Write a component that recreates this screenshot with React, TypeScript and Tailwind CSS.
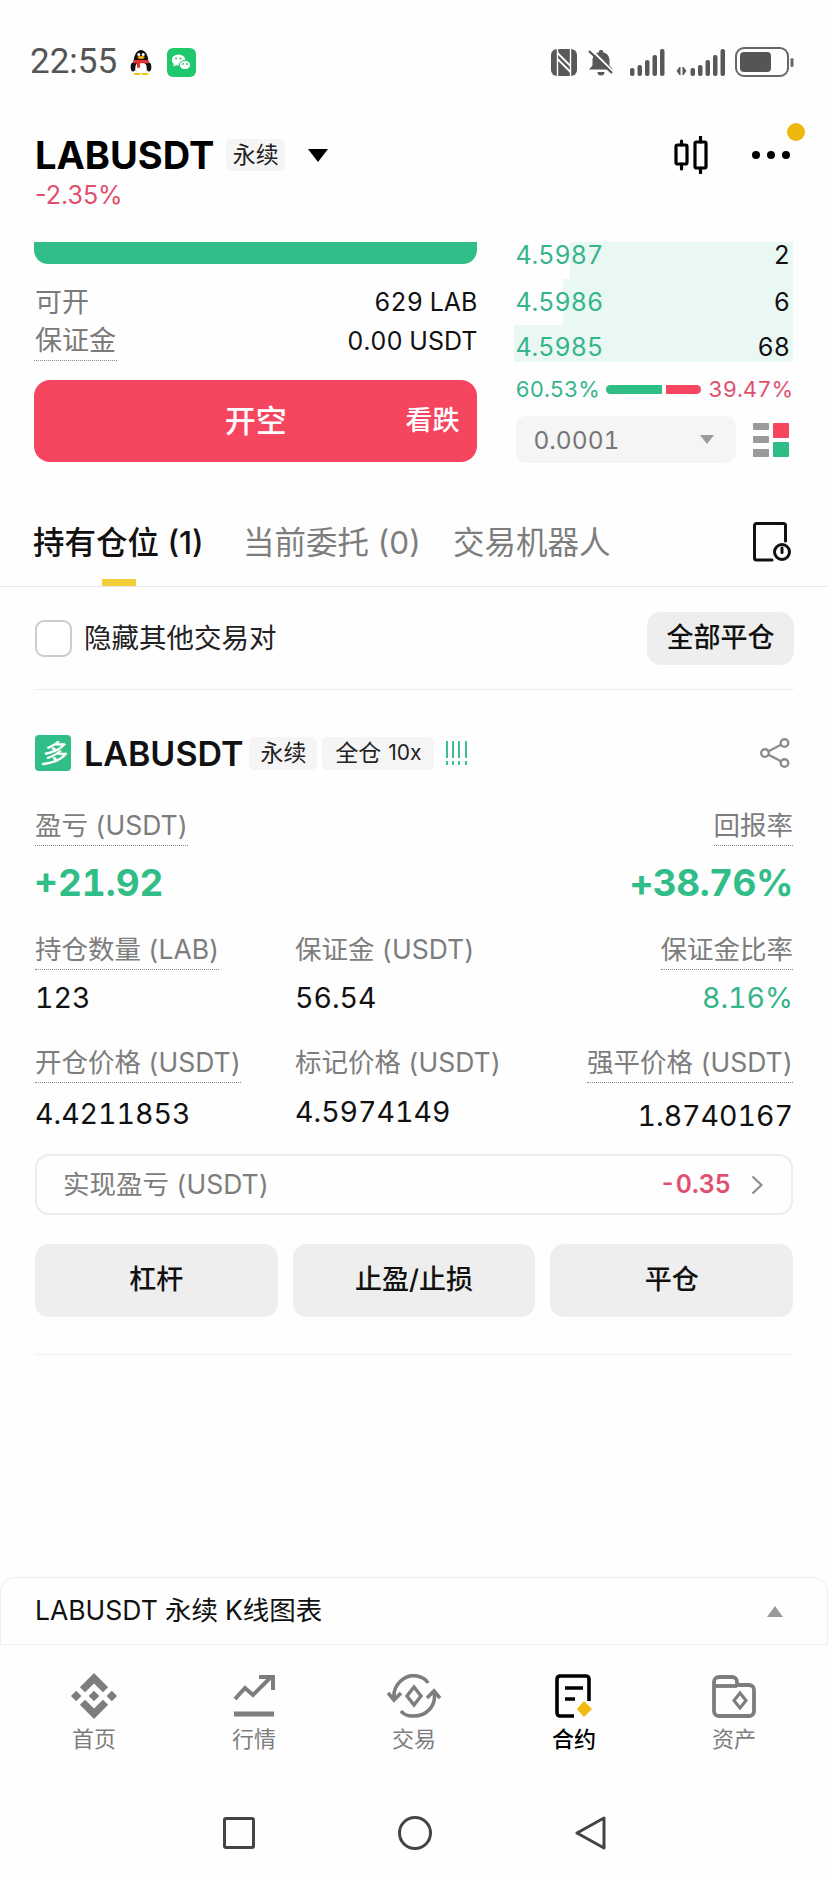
import React from "react";

const Dotted = ({ children, className = "" }: { children: React.ReactNode; className?: string }) => (
  <span className={"inline-flex items-center border-b border-dotted border-[#8a8a8a] " + className}>{children}</span>
);

const Penguin = () => (
  <svg width="22" height="26" viewBox="0 0 22 26">
    <ellipse cx="11" cy="13" rx="7.500" ry="12" fill="#111" />
    <ellipse cx="11" cy="19" rx="6" ry="6" fill="#fff" />
    <ellipse cx="3" cy="18" rx="2.300" ry="4.500" fill="#111" />
    <ellipse cx="19" cy="18" rx="2.300" ry="4.500" fill="#111" />
    <circle cx="8.800" cy="5.500" r="1.500" fill="#fff" />
    <circle cx="13.200" cy="5.500" r="1.500" fill="#fff" />
    <ellipse cx="11" cy="8.500" rx="3.500" ry="1.400" fill="#f5b400" />
    <path d="M3.500 11h15v3.200H10v4.500H7v-4.500H3.500z" fill="#e2322f" />
    <ellipse cx="7" cy="25" rx="3.500" ry="1" fill="#f5c400" />
    <ellipse cx="15" cy="25" rx="3.500" ry="1" fill="#f5c400" />
  </svg>
);

const WeChat = () => (
  <svg width="29" height="29" viewBox="0 0 29 29">
    <rect width="29" height="29" rx="6" fill="#1fc76d" />
    <ellipse cx="11.500" cy="12" rx="6.800" ry="5.600" fill="#fff" />
    <path d="M7 15.500l-1 3 3.500-1.600z" fill="#fff" />
    <ellipse cx="18" cy="17" rx="5.600" ry="4.600" fill="#fff" stroke="#1fc76d" strokeWidth="1" />
    <circle cx="9" cy="10.500" r="1" fill="#1fc76d" />
    <circle cx="13.500" cy="10.500" r="1" fill="#1fc76d" />
    <circle cx="16" cy="16" r=".9" fill="#1fc76d" />
    <circle cx="20" cy="16" r=".9" fill="#1fc76d" />
  </svg>
);

const Nfc = () => (
  <svg width="26" height="27" viewBox="0 0 26 27">
    <rect width="26" height="27" rx="6" fill="#585858" />
    <path d="M6.500 0v27M19.500 0v27" stroke="#fff" strokeWidth="1.400" />
    <path d="M6.500 4L19.500 17M6.500 10L19.500 23" stroke="#fff" strokeWidth="1.800" />
  </svg>
);

const MutedBell = () => (
  <svg width="26" height="27" viewBox="0 0 26 27">
    <path d="M13 1a2 2 0 012 2.300c4.500 1 6.500 4.300 6.500 8.200v5l3.500 4H1l3.500-4v-5c0-3.900 2-7.200 6.500-8.200A2 2 0 0113 1z" fill="#585858" />
    <path d="M9.500 23h7a3.500 3.500 0 01-7 0z" fill="#585858" />
    <path d="M3 0.500l22 22" stroke="#fefefe" strokeWidth="2" />
    <path d="M1 2l23 22" stroke="#585858" strokeWidth="2.400" />
  </svg>
);

const Bars = ({ x = 0 }: { x?: number }) => (
  <g fill="#585858">
    <rect x={x} y="19" width="4.500" height="8" rx="2" />
    <rect x={x + 7.500} y="16" width="4.500" height="11" rx="2" />
    <rect x={x + 15} y="11" width="4.500" height="16" rx="2" />
    <rect x={x + 22.500} y="6" width="4.500" height="21" rx="2" />
    <rect x={x + 30} y="0" width="4.500" height="27" rx="2" />
  </g>
);

const Signal = () => (
  <svg width="35" height="27" viewBox="0 0 35 27">
    <Bars />
  </svg>
);

const SignalData = () => (
  <svg width="50" height="27" viewBox="0 0 50 27">
    <path d="M5 26V18l-3 4zM8 18v8l3-4z" fill="#585858" stroke="#585858" strokeWidth="1" />
    <Bars x={15.500} />
  </svg>
);

const Battery = () => (
  <svg width="59" height="30" viewBox="0 0 59 30">
    <rect x="1" y="1" width="52" height="28" rx="8" fill="none" stroke="#666" strokeWidth="2" />
    <rect x="5" y="5" width="31" height="20" rx="4" fill="#555" />
    <rect x="55.500" y="11" width="3" height="9" rx="1.500" fill="#666" />
  </svg>
);

const Candles = () => (
  <svg width="34" height="38" viewBox="0 0 34 38" fill="none" stroke="#000" strokeWidth="3.200" strokeLinecap="round">
    <rect x="2" y="9" width="11" height="19" rx="1.500" />
    <path d="M7.500 5v4M7.500 28v5" />
    <rect x="21" y="6" width="11" height="26" rx="1.500" />
    <path d="M26.500 1v5M26.500 32v5" />
  </svg>
);

const HistoryIcon = () => (
  <svg width="38" height="40" viewBox="0 0 38 40" fill="none" stroke="#111" strokeWidth="3">
    <path d="M19 38H3.500a2 2 0 01-2-2V3.500a2 2 0 012-2h27a2 2 0 012 2V19" strokeLinecap="round" />
    <circle cx="29" cy="30" r="7.500" />
    <path d="M29 26v4.500" strokeLinecap="round" />
  </svg>
);

const BookIcon = () => (
  <svg width="36" height="36" viewBox="0 0 36 36">
    <rect x="0" y="1" width="16" height="7" rx="1" fill="#9a9a9a" />
    <rect x="0" y="14" width="16" height="7" rx="1" fill="#9a9a9a" />
    <rect x="0" y="27" width="16" height="8" rx="1" fill="#9a9a9a" />
    <rect x="20" y="1" width="16" height="15" rx="1" fill="#f5455f" />
    <rect x="20" y="20" width="16" height="15" rx="1" fill="#2ebd85" />
  </svg>
);

const Share = () => (
  <svg width="30" height="30" viewBox="0 0 30 30" fill="none" stroke="#8c8c8c" strokeWidth="2.400">
    <circle cx="24.500" cy="5" r="3.800" />
    <circle cx="24.500" cy="25" r="3.800" />
    <circle cx="5" cy="15" r="3.800" />
    <path d="M8.500 13.200l12.500-6.400M8.500 16.800l12.500 6.400" />
  </svg>
);

const HomeIcon = () => (
  <svg width="46" height="46" viewBox="0 0 126.610 126.610" fill="#7d7d7d">
    <path d="M38.730 53.200l24.590-24.580 24.600 24.600 14.300-14.310L63.320 0l-38.900 38.900zM0 63.310l14.300-14.310 14.310 14.310-14.310 14.300zM38.730 73.410l24.590 24.590 24.600-24.600 14.310 14.290-38.900 38.910-38.910-38.880-.02-.02zM98 63.310l14.300-14.310 14.310 14.300-14.310 14.320z" />
    <path d="M77.830 63.300L63.320 48.780 52.590 59.510l-1.240 1.230-2.540 2.540 14.510 14.500 14.510-14.470z" />
  </svg>
);

const MarketIcon = () => (
  <svg width="44" height="44" viewBox="0 0 44 44" fill="none" stroke="#7d7d7d" strokeWidth="4">
    <path d="M3 25l10-11 8 7L39 3" />
    <path d="M27 3h14v13" />
    <path d="M2 40h40" strokeWidth="5" />
  </svg>
);

const TradeIcon = () => (
  <svg width="54" height="44" viewBox="0 0 54 44" fill="none" stroke="#7d7d7d" strokeWidth="3.600">
    <path d="M7 24C6 10 18 0 30 2c5 1 9 3 11 7" />
    <path d="M47 17c3 15-8 26-22 25-4 0-9-2-11-5" />
    <path d="M1 19l6 7 7-7M40 24l7-7 6 7" />
    <path d="M27 13l7 9-7 9-7-9z" strokeWidth="3.400" />
  </svg>
);

const ContractIcon = () => (
  <svg width="40" height="44" viewBox="0 0 40 44">
    <path d="M20 42H6a3 3 0 01-3-3V5a3 3 0 013-3h26a3 3 0 013 3v22" fill="none" stroke="#000" strokeWidth="3.600" />
    <path d="M11 14h18M11 25h10" stroke="#000" strokeWidth="3.600" />
    <path d="M30 27l8 8-8 8-7-8z" fill="#f0b90b" />
  </svg>
);

const AssetIcon = () => (
  <svg width="44" height="44" viewBox="0 0 44 44" fill="none" stroke="#7d7d7d" strokeWidth="3.800">
    <path d="M2 8a5 5 0 015-5h13a5 5 0 015 5v3h12a5 5 0 015 5v21a5 5 0 01-5 5H7a5 5 0 01-5-5z" />
    <path d="M2 12h23" />
    <path d="M28 19l6 7.500-6 7.500-6-7.500z" strokeWidth="3" />
  </svg>
);

const NavItem = ({ icon, label, active = false }: { icon: React.ReactNode; label: string; active?: boolean }) => (
  <div className="flex flex-col items-center">
    <div className="h-[44px] flex items-center justify-center">{icon}</div>
    <div className={"mt-[6px] h-[30px] leading-[30px] text-[22px] " + (active ? "text-black font-medium" : "text-[#7d7d7d]")}>{label}</div>
  </div>
);

const Btn = ({ children }: { children: React.ReactNode }) => (
  <div className="h-[73px] rounded-[14px] bg-[#eeeeee] flex items-center justify-center text-[27px] font-medium text-[#111]">{children}</div>
);

const Tag = ({ children, className = "" }: { children: React.ReactNode; className?: string }) => (
  <span className={"h-[33px] rounded-[5px] bg-[#f5f5f5] flex items-center justify-center text-[23px] text-[#222] " + className}>{children}</span>
);

const OrderRow = ({ price, qty, bar, h, pt }: { price: string; qty: string; bar: string; h: string; pt: string }) => (
  <div className={"relative flex justify-between items-start pr-[3px] pl-[1px] " + h + " " + pt}>
    <div className={"absolute inset-y-0 right-0 bg-[#eaf8f3] " + bar} />
    <span className="relative text-[25px] leading-[26px] text-[#36b48a]">{price}</span>
    <span className="relative text-[25px] leading-[26px] text-[#111]">{qty}</span>
  </div>
);

export default function App() {
  return (
    <div className="w-[828px] h-[1878px] flex flex-col overflow-hidden bg-[#fefefe] text-black tabular-nums [font-family:Inter,'Noto_Sans_CJK_SC',sans-serif]">
      {/* status bar */}
      <div className="h-[124px] shrink-0 flex items-center pl-[30px] pr-[34px]">
        <span className="w-[86px] text-[35px] text-[#555] [font-family:Roboto,sans-serif]">22:55</span>
        <span className="ml-[14px] flex"><Penguin /></span>
        <span className="ml-[15px] flex"><WeChat /></span>
        <div className="ml-auto flex items-center">
          <Nfc />
          <span className="ml-[11px] flex"><MutedBell /></span>
          <span className="ml-[16px] flex"><Signal /></span>
          <span className="ml-[10px] flex"><SignalData /></span>
          <span className="ml-[10px] flex"><Battery /></span>
        </div>
      </div>

      {/* header */}
      <div className="h-[118px] shrink-0 relative pl-[35px] pr-[38px]">
        <div className="h-[62px] flex items-center">
          <span className="text-[38px] font-bold">LABUSDT</span>
          <Tag className="ml-[12px] w-[59px] !h-[32px]">永续</Tag>
          <svg className="ml-[23px]" width="20" height="13" viewBox="0 0 20 13"><path d="M0 0h20L10 13z" fill="#000" /></svg>
          <span className="ml-auto flex mr-[44px]"><Candles /></span>
          <svg width="38" height="8" viewBox="0 0 38 8" fill="#000"><circle cx="4" cy="4" r="4" /><circle cx="19" cy="4" r="4" /><circle cx="34" cy="4" r="4" /></svg>
        </div>
        <div className="h-[20px] flex items-center text-[25px] text-[#e0506e] normal-nums">-2.35%</div>
        <span className="absolute left-[787px] top-[-1px] w-[18px] h-[18px] rounded-full bg-[#eeb70f]" />
      </div>

      {/* trade */}
      <div className="h-[226px] shrink-0 flex pl-[34px] pr-[35px]">
        <div className="w-[444px]">
          <div className="h-[22px] rounded-b-[14px] bg-[#31bd87]" />
          <div className="mt-[21px] h-[36px] flex items-center justify-between text-[25px]">
            <span className="text-[#7a7a7a] text-[27px] pl-[1px]">可开</span>
            <span className="text-[#111]">629 LAB</span>
          </div>
          <div className="mt-[1px] flex items-start justify-between text-[25px] h-[40px]">
            <span className="flex h-[39px] items-center border-b border-dotted border-[#8a8a8a] text-[#7a7a7a] text-[27px] px-[1px]">保证金</span>
            <span className="text-[#111] leading-[38px]">0.00 USDT</span>
          </div>
          <div className="mt-[18px] h-[82px] rounded-[16px] bg-[#f5455f] relative flex items-center justify-center text-white">
            <span className="text-[31px] font-medium">开空</span>
            <span className="absolute right-[18px] text-[27px] font-medium">看跌</span>
          </div>
        </div>
        <div className="w-[279px] ml-[37px]">
          <OrderRow price="4.5987" qty="2" bar="w-[223px]" h="h-[37px]" pt="pt-0" />
          <OrderRow price="4.5986" qty="6" bar="w-[230px]" h="h-[46px]" pt="pt-[10px]" />
          <OrderRow price="4.5985" qty="68" bar="w-full" h="h-[37px]" pt="pt-[9px]" />
          <div className="relative mt-[12px] h-[30px] flex items-center text-[22px] pl-[1px]">
            <span className="text-[#36b48a]">60.53%</span>
            <span className="absolute left-[92px] w-[56px] h-[9px] rounded-l-full bg-[#2ebd85]" />
            <span className="absolute left-[152px] w-[35px] h-[9px] rounded-r-full bg-[#f5455f]" />
            <span className="ml-auto text-[#e0506e]">39.47%</span>
          </div>
          <div className="mt-[12px] flex items-center pl-[2px]">
            <div className="w-[220px] h-[47px] rounded-[10px] bg-[#f5f5f5] flex items-center pl-[17px] pr-[22px] justify-between">
              <span className="text-[24.500px] text-[#777] pt-[2px]">0.0001</span>
              <svg width="14" height="9" viewBox="0 0 14 9"><path d="M0 0h14L7 9z" fill="#9a9a9a" /></svg>
            </div>
            <span className="ml-[17px] flex"><BookIcon /></span>
          </div>
        </div>
      </div>

      {/* tabs */}
      <div className="h-[119px] shrink-0 relative border-b border-[#e6e6e6] flex items-start pt-[56px] pl-[33px] pr-[37px] normal-nums">
        <span className="text-[31.500px] leading-[38px] font-medium text-[#111]">持有仓位 (1)</span>
        <span className="absolute left-[243px] text-[31.500px] leading-[38px] text-[#7d7d7d]">当前委托 (0)</span>
        <span className="absolute left-[453px] text-[31.500px] leading-[38px] text-[#7d7d7d]">交易机器人</span>
        <span className="ml-auto -mt-[2px] flex"><HistoryIcon /></span>
        <span className="absolute left-[102px] bottom-0 w-[34px] h-[7px] bg-[#f3cf3a]" />
      </div>

      {/* filter */}
      <div className="mx-[34px] h-[103px] shrink-0 border-b border-[#eeeeee] flex items-center justify-between">
        <div className="flex items-center pl-[1px]">
          <span className="w-[37px] h-[37px] rounded-[9px] border-2 border-[#cccccc] bg-white" />
          <span className="ml-[12px] text-[27.500px] text-[#222] pt-[1px]">隐藏其他交易对</span>
        </div>
        <div className="w-[147px] h-[53px] rounded-[14px] bg-[#eeeeee] flex items-center justify-center text-[27px] text-[#111] font-medium">全部平仓</div>
      </div>

      {/* position */}
      <div className="px-[35px] shrink-0">
        <div className="mt-[45px] h-[36px] flex items-center">
          <span className="w-[36px] h-[36px] rounded-[4px] bg-[#31bd87] flex items-center justify-center text-white text-[26px] italic font-medium">多</span>
          <span className="ml-[13px] text-[34px] font-semibold text-[#111]">LABUSDT</span>
          <Tag className="ml-[6px] w-[68px]">永续</Tag>
          <Tag className="ml-[5px] w-[112px] gap-[7px]"><span>全仓</span><span className="text-[21px] normal-nums">10x</span></Tag>
          <svg className="ml-[11px]" width="24" height="24" viewBox="0 0 24 24" stroke="#3dbf8f" strokeWidth="2">
            <path d="M2 0v17M2 20v4M8 0v17M8 20v4M14 0v17M14 20v4M21 0v17M21 20v4" />
          </svg>
          <span className="ml-auto mr-[3px] flex"><Share /></span>
        </div>

        <div className="mt-[35px] flex justify-between text-[26.500px] text-[#7d7d7d]">
          <Dotted className="h-[40px]">盈亏 (USDT)</Dotted>
          <Dotted className="h-[40px]">回报率</Dotted>
        </div>
        <div className="mt-[12px] h-[50px] flex items-center justify-between text-[37px] font-bold text-[#31bd87]">
          <span className="-ml-[1px]">+21.92</span>
          <span className="tracking-[-0.5px]">+38.76%</span>
        </div>

        <div className="mt-[22px] grid grid-cols-[260px_260px_1fr] text-[26.500px] text-[#7d7d7d]">
          <div className="flex"><Dotted className="h-[40px]">持仓数量 (LAB)</Dotted></div>
          <div className="flex"><Dotted className="h-[40px] !border-transparent">保证金 (USDT)</Dotted></div>
          <div className="flex justify-end"><Dotted className="h-[40px]">保证金比率</Dotted></div>
        </div>
        <div className="mt-[7px] h-[38px] grid grid-cols-[260px_260px_1fr] items-center text-[28.500px] text-[#111]">
          <span>123</span>
          <span>56.54</span>
          <span className="text-right text-[#36b48a]">8.16%</span>
        </div>

        <div className="mt-[29px] grid grid-cols-[260px_260px_1fr] text-[26.500px] text-[#7d7d7d]">
          <div className="flex"><Dotted className="h-[39px]">开仓价格 (USDT)</Dotted></div>
          <div className="flex"><Dotted className="h-[39px] !border-transparent">标记价格 (USDT)</Dotted></div>
          <div className="flex justify-end"><Dotted className="h-[39px]">强平价格 (USDT)</Dotted></div>
        </div>
        <div className="mt-[8px] h-[38px] grid grid-cols-[260px_260px_1fr] items-center text-[28.500px] text-[#111]">
          <span>4.4211853</span>
          <span className="pb-[4px]">4.5974149</span>
          <span className="text-right pt-[4px]">1.8740167</span>
        </div>

        <div className="mt-[25px] h-[61px] rounded-[14px] border-2 border-[#ececec] flex items-center pl-[26px] pr-[28px]">
          <span className="text-[26.500px] text-[#7d7d7d]">实现盈亏 (USDT)</span>
          <span className="ml-auto text-[25px] font-semibold text-[#e0506e]">-0.35</span>
          <svg className="ml-[20px]" width="12" height="20" viewBox="0 0 12 20" fill="none" stroke="#8c8c8c" strokeWidth="2.200"><path d="M1.500 1.500L10.500 10l-9 8.500" /></svg>
        </div>

        <div className="mt-[29px] grid grid-cols-3 gap-[15px]">
          <Btn>杠杆</Btn>
          <Btn>止盈/止损</Btn>
          <Btn>平仓</Btn>
        </div>
        <div className="mt-[37px] border-t border-[#f0f0f0]" />
      </div>

      <div className="flex-1" />

      {/* kline sheet */}
      <div className="h-[68px] shrink-0 rounded-t-[14px] border border-[#eeeeee] flex items-center pl-[34px] pr-[44px]">
        <span className="text-[26.500px] text-[#111]">LABUSDT 永续 K线图表</span>
        <svg className="ml-auto" width="16" height="11" viewBox="0 0 16 11"><path d="M8 0l8 11H0z" fill="#9a9a9a" /></svg>
      </div>

      {/* nav */}
      <div className="shrink-0 h-[233px] flex flex-col">
        <div className="mt-[29px] pl-[14px] grid grid-cols-[160px_160px_160px_160px_160px] w-[814px]">
          <NavItem icon={<HomeIcon />} label="首页" />
          <NavItem icon={<MarketIcon />} label="行情" />
          <NavItem icon={<TradeIcon />} label="交易" />
          <NavItem icon={<ContractIcon />} label="合约" active />
          <NavItem icon={<AssetIcon />} label="资产" />
        </div>
        <div className="mt-[62px] flex items-center justify-center gap-[143px]">
          <span className="w-[32px] h-[32px] rounded-[3px] border-[3px] border-[#444]" />
          <span className="w-[34px] h-[34px] rounded-full border-[3px] border-[#444]" />
          <svg width="31" height="34" viewBox="0 0 31 34" fill="none" stroke="#444" strokeWidth="3" strokeLinejoin="round"><path d="M29 2v30L2 17z" /></svg>
        </div>
      </div>
    </div>
  );
}
